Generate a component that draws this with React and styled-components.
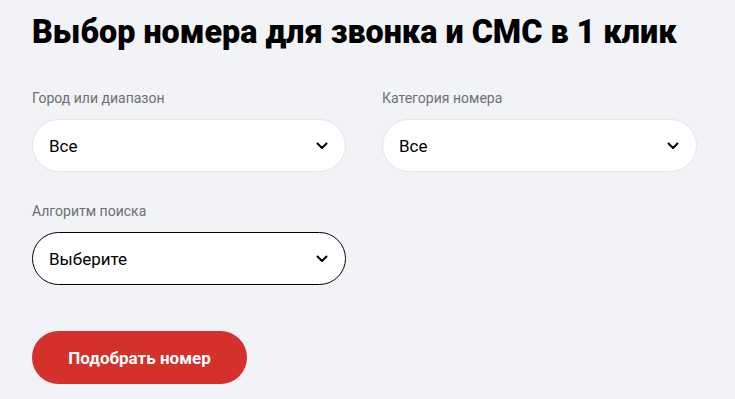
import React from "react";
import styled, { createGlobalStyle } from "styled-components";

const Global = createGlobalStyle`
  html, body { margin: 0; padding: 0; background: #f2f3f7; }
  body { font-family: Roboto, "Noto Sans", sans-serif; color: #000; }
  * { box-sizing: border-box; }
`;

const Page = styled.div`
  padding: 10px 32px 0 32px;
  width: 735px;
  height: 399px;
  overflow: hidden;
`;

const Title = styled.h1`
  margin: 0;
  font-size: 32.3px;
  line-height: 44px;
  font-weight: 900;
  letter-spacing: 0;
`;

const Grid = styled.div`
  display: grid;
  grid-template-columns: 314px 315px;
  column-gap: 36px;
  row-gap: 31px;
  margin-top: 36px;
`;

const Field = styled.div`
  display: flex;
  flex-direction: column;
  gap: 13px;
`;

const Label = styled.div`
  font-size: 14px;
  line-height: 16px;
  color: #6f6f73;
`;

const Select = styled.div`
  height: 53px;
  border-radius: 27px;
  background: #fff;
  border: 1px solid ${(p) => (p.$active ? "#000" : "#e3e4e8")};
  display: flex;
  align-items: center;
  justify-content: space-between;
  padding: 0 17px 0 16px;
  font-size: 17px;
  cursor: pointer;
`;

const Button = styled.button`
  margin-top: 46px;
  width: 215px;
  height: 53px;
  border: none;
  border-radius: 27px;
  background: #d4302c;
  color: #fff;
  font-family: Roboto, sans-serif;
  font-size: 17px;
  font-weight: 700;
  cursor: pointer;
`;

const Chevron = () => (
  <svg width="12" height="8" viewBox="0 0 12 8" fill="none">
    <path d="M1.5 1.5 L6 6 L10.5 1.5" stroke="#000" strokeWidth="2" strokeLinecap="round" strokeLinejoin="round" />
  </svg>
);

const SelectField = ({ label, value, active }) => (
  <Field>
    <Label>{label}</Label>
    <Select $active={active}>
      <span>{value}</span>
      <Chevron />
    </Select>
  </Field>
);

export default function App() {
  return (
    <>
      <Global />
      <Page>
        <Title>Выбор номера для звонка и СМС в 1 клик</Title>
        <Grid>
          <SelectField label="Город или диапазон" value="Все" />
          <SelectField label="Категория номера" value="Все" />
          <SelectField label="Алгоритм поиска" value="Выберите" active />
        </Grid>
        <Button>Подобрать номер</Button>
      </Page>
    </>
  );
}
